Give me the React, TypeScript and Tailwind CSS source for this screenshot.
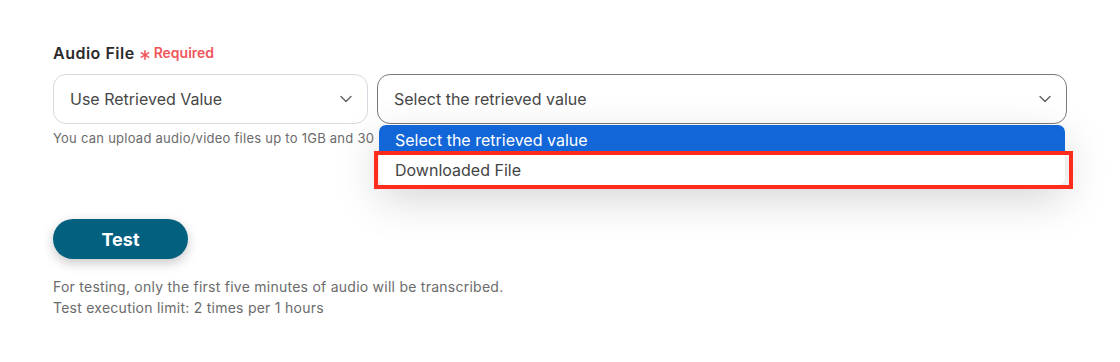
import { ChevronDown } from "lucide-react";

const font = { fontFamily: "Inter, 'Noto Sans', sans-serif" };

function SelectBox({
  value,
  focused,
  className,
  children,
}: {
  value: string;
  focused?: boolean;
  className?: string;
  children?: React.ReactNode;
}) {
  return (
    <div className={`relative ${className ?? ""}`}>
      <div
        className={`flex h-[50px] items-center justify-between rounded-[13px] border bg-white pl-[16px] pr-[11px] ${
          focused ? "border-[#7a7a7a]" : "border-[#d6dae0]"
        }`}
      >
        <span className="text-[16px] text-[#474747]">{value}</span>
        <ChevronDown className="h-[20px] w-[20px] text-[#666]" strokeWidth={1.75} />
      </div>
      {children}
    </div>
  );
}

export default function App() {
  return (
    <div className="min-h-[362px] bg-white px-[53px] pt-[43px]" style={font}>
      {/* label */}
      <div className="flex items-center gap-[5px] leading-[20px]">
        <span className="text-[16px] font-semibold tracking-[0.5px] text-[#2b2b2b]">Audio File</span>
        <span className="flex items-center gap-[4px] text-[14px] font-semibold text-[#f0565c]">
          <svg viewBox="0 0 10 10" className="mt-[3px] h-[10px] w-[10px]" stroke="currentColor" strokeWidth="1.6" strokeLinecap="round">
            <line x1="5" y1="0.8" x2="5" y2="9.2" />
            <line x1="1.4" y1="2.9" x2="8.6" y2="7.1" />
            <line x1="1.4" y1="7.1" x2="8.6" y2="2.9" />
          </svg>
          Required
        </span>
      </div>

      {/* selects */}
      <div className="mt-[11px] flex gap-[9px]">
        <div className="w-[315px] shrink-0">
          <SelectBox value="Use Retrieved Value" />
          <p className="mt-[6px] w-[322px] overflow-hidden whitespace-nowrap text-[13px] leading-[17px] tracking-[0.25px] text-[#6b6b6b]">
            You can upload audio/video files up to 1GB and 30
          </p>
        </div>
        <SelectBox value="Select the retrieved value" focused className="flex-1">
          <div className="absolute left-[2px] right-[2px] top-[51px] z-10 rounded-[7px] bg-white shadow-[0_14px_44px_rgba(0,0,0,0.17)]">
            <div className="flex h-[30px] items-center rounded-t-[7px] bg-[#1266d8] px-[16px] text-[16px] text-white">
              Select the retrieved value
            </div>
            <div className="relative flex h-[30px] items-center rounded-b-[7px] px-[16px] text-[16px] text-[#444]">
              Downloaded File
              <div className="pointer-events-none absolute -bottom-[4px] -left-[5px] -right-[8px] -top-[4px] border-[4px] border-[#ff2b1c]" />
            </div>
          </div>
        </SelectBox>
      </div>

      <button className="mt-[72px] h-[40px] w-[135px] rounded-full bg-[#04607f] text-[18px] font-bold text-white shadow-[0_4px_12px_rgba(0,0,0,0.22)]">
        Test
      </button>

      <div className="mt-[17px] text-[14px] leading-[21px] tracking-[0.25px] text-[#6b6b6b]">
        <p>For testing, only the first five minutes of audio will be transcribed.</p>
        <p>Test execution limit: 2 times per 1 hours</p>
      </div>
    </div>
  );
}
